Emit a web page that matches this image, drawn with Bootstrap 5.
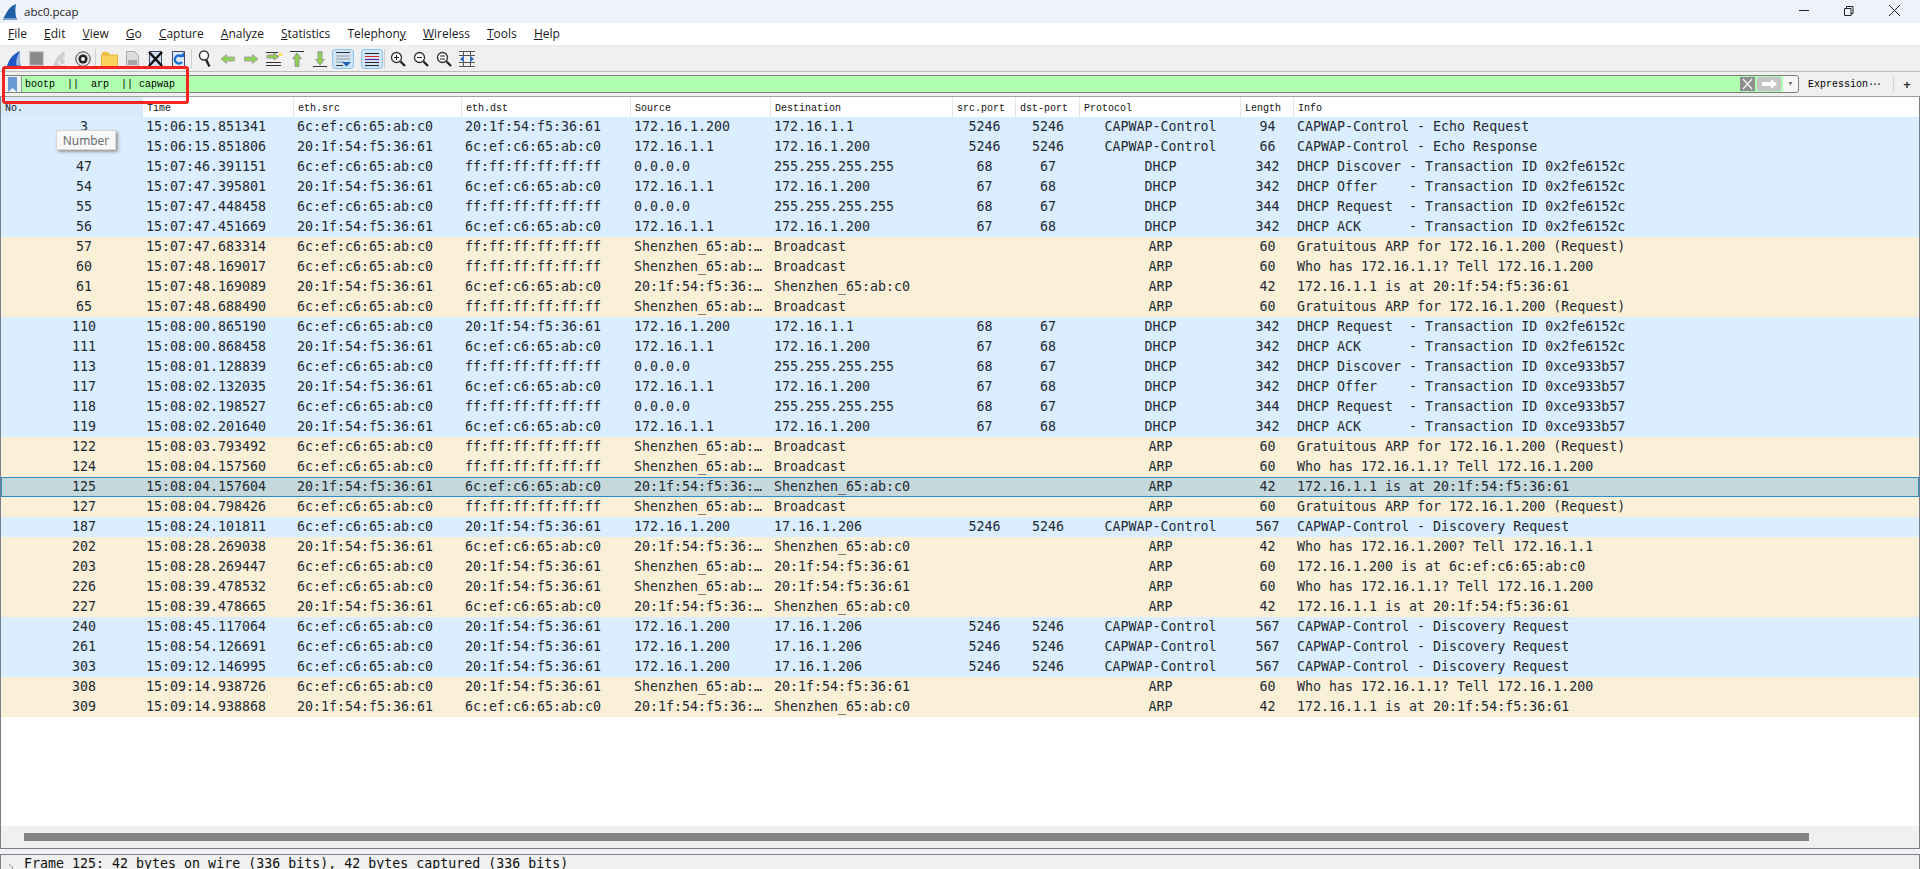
<!doctype html>
<html><head><meta charset="utf-8">
<link href="https://cdn.jsdelivr.net/npm/bootstrap@5.3.0/dist/css/bootstrap.min.css" rel="stylesheet">
<style>
html,body{height:869px;overflow:hidden;background:#f0f0f0}
.ws-app{height:869px;font-family:"Open Sans","Noto Sans",sans-serif;font-size:12px;color:#111;position:relative}
.ws-title{height:23px;background:#eef2fb;padding-left:3px;flex:none}
.ws-title-text{margin-left:7px;font-size:11.500px;line-height:23px;color:#222}
.ws-winbtns{margin-left:auto;width:133px}
.ws-menu{height:23px;flex:none;background:#fff;border-bottom:1px solid #ececec;padding-left:8px;gap:17.100px;line-height:22px;font-size:12px;color:#1a1a1a}
.ws-menu u{text-decoration-thickness:1px;text-underline-offset:1px}
.ws-tools{height:26px;flex:none;background:#f0f0f0;padding-left:2px;border-bottom:1px solid #bdbdbd}
.ws-tools svg{display:block;flex:none}
.ws-slot{width:23px;flex:none;display:flex;justify-content:center}
.ws-slot2{margin-left:6px}
.ws-on{background:#cde4f7;border:1px solid #8fc4ee;border-radius:3px;width:22px;height:20px;display:flex;align-items:center;justify-content:center}
.ws-sep{width:1px;height:19px;background:#cfcfcf;margin:0 1.250px;flex:none}
.ws-filter{height:24px;flex:none;padding:3px 0 0 2px;background:#f0f0f0}
.ws-fbox{height:18px;flex:1;background:#afffaf;border:1px solid #7e7e7e;border-radius:0 3px 3px 0;font-family:"Liberation Mono",monospace;font-size:10px;line-height:18px;color:#000}
.ws-book{width:19px;flex:none;background:#f0f0f0;border-right:1px solid #7e9e8e;display:flex;align-items:center;justify-content:center}
.ws-ftext{padding-left:3px;white-space:pre}
.ws-fend{margin-left:auto;flex:none;gap:2px}
.ws-fdrop{width:15px;background:#f6f6f6;text-align:center;font-size:9px;color:#666;align-self:stretch;border-radius:0 3px 3px 0;line-height:16px}
.ws-expr{width:94px;flex:none;font-family:"Liberation Mono",monospace;font-size:10px;padding-left:9px;line-height:20px;color:#000;white-space:nowrap}
.ws-expr span{letter-spacing:-2px}
.ws-plus{width:27px;flex:none;border-left:1px solid #d0d0d0;height:14px;text-align:center;font-weight:700;line-height:14px;font-size:13px;margin-top:2px;color:#333}
.ws-list{height:753px;flex:none;background:#fff;border:1px solid #7b7f8b;border-top:1px solid #a0a0a0;position:relative;display:flex;flex-direction:column}
.ws-head,.ws-row{display:grid;grid-template-columns:142px 151px 168px 169px 140px 182px 63px 64px 161px 53px 1fr}
.ws-head{height:20px;flex:none;font-family:"Liberation Mono",monospace;font-size:10px;line-height:23px;color:#111}
.ws-head>div{padding-left:4px;border-right:1px solid #e4e4e4;white-space:nowrap;overflow:hidden}
.ws-head>div:first-child{background:#d9ebfb;padding-left:4px;border-right:0}
.ws-head>div:last-child{border-right:0}
.ws-rows{flex:1}
.ws-row{height:20px;font-family:"DejaVu Sans Mono",monospace;font-size:13.300px;line-height:20px;color:#1f2a33;white-space:pre}
.ws-row>div{overflow:hidden;padding-left:3px}
.ws-row .ws-c{padding-left:0;text-align:center}
.ws-row .ws-n{padding-left:24px;text-align:center}
.ws-blue{background:#daeeff}
.ws-tan{background:#faf0d7}
.ws-row.ws-sel{background:#c5d9dd;box-shadow:inset 0 0 0 1px #2d8fc9}
.ws-hscroll{height:22px;flex:none;background:#f0f0f0;padding:7px 0 0 23px}
.ws-thumb{height:8px;width:1785px;background:#848484}
.ws-detail{height:15px;flex:none;margin-top:5px;border:1px solid #7b7f8b;border-bottom:0;background:#f0f0f0;overflow:hidden;font-family:"DejaVu Sans Mono",monospace;font-size:13.300px;line-height:18px;color:#111;white-space:pre;display:flex}
.ws-detail .ws-arrow{width:23px;flex:none}
.ws-tip{position:absolute;left:56px;top:130px;width:60px;height:20px;background:#f8f8f8;border:1px solid #d8d8d8;box-shadow:2px 2px 3px #999;font-size:12px;line-height:19px;text-align:center;color:#666}
.ws-red{position:absolute;left:2px;top:66px;width:187px;height:38px;border:3px solid #f4241f;border-radius:3px;pointer-events:none}
</style></head><body>
<div class="ws-app d-flex flex-column">
 <div class="ws-title d-flex align-items-center">
  <svg width="14" height="18" viewBox="0 0 14 18"><path d="M0 17C3 9 7 3 13 1c-1 5-1 11 1 16z" fill="#1e5fa8"/><path d="M0 17l14 0-.6-2H1z" fill="#7aa4d0"/></svg>
  <span class="ws-title-text">abc0.pcap</span>
  <div class="ws-winbtns d-flex align-items-center">
   <svg width="133" height="23" viewBox="0 0 133 23"><path d="M12 10.500h10" stroke="#222" fill="none"/><path d="M57.500 8.500h6.500v7h-6.500zM59.500 8.500v-2h6.500v7h-2" stroke="#222" fill="none"/><path d="M102 5l11 11M113 5l-11 11" stroke="#222" fill="none"/></svg>
  </div>
 </div>
 <div class="ws-menu d-flex">
  <span><u>F</u>ile</span><span><u>E</u>dit</span><span><u>V</u>iew</span><span><u>G</u>o</span><span><u>C</u>apture</span><span><u>A</u>nalyze</span><span><u>S</u>tatistics</span><span>Telephon<u>y</u></span><span><u>W</u>ireless</span><span><u>T</u>ools</span><span><u>H</u>elp</span>
 </div>
 <div class="ws-tools d-flex align-items-center" id="tb"></div>
 <div class="ws-filter d-flex">
  <div class="ws-fbox d-flex">
   <div class="ws-book"><svg width="9" height="15" viewBox="0 0 9 15"><path d="M0 0h9v15L4.500 11 0 15z" fill="#6a9ad6"/></svg></div>
   <div class="ws-ftext">bootp  ||  arp  || capwap</div>
   <div class="ws-fend d-flex align-items-center">
    <svg width="15" height="14" viewBox="0 0 15 14"><rect width="15" height="14" fill="#8e8e8e"/><path d="M3 2l9 10M12 2L3 12" stroke="#f4f4f4" stroke-width="1.300"/></svg>
    <svg width="24" height="14" viewBox="0 0 24 14"><rect width="24" height="14" rx="2" fill="#c4c4c4"/><path d="M5 5h9V2l6 5-6 5V9H5z" fill="#fff"/></svg>
    <div class="ws-fdrop">&#9662;</div>
   </div>
  </div>
  <div class="ws-expr">Expression<span>···</span></div>
  <div class="ws-plus">+</div>
 </div>
 <div class="ws-list">
  <div class="ws-head"><div>No.</div><div>Time</div><div>eth.src</div><div>eth.dst</div><div>Source</div><div>Destination</div><div>src.port</div><div>dst-port</div><div>Protocol</div><div>Length</div><div>Info</div></div>
  <div class="ws-rows" id="rows"></div>
  <div class="ws-hscroll"><div class="ws-thumb"></div></div>
 </div>
 <div class="ws-detail"><div class="ws-arrow"><svg width="19" height="15" viewBox="0 0 19 15"><path d="M8 7l4 4-4 4" stroke="#999" fill="none"/></svg></div><div>Frame 125: 42 bytes on wire (336 bits), 42 bytes captured (336 bits)</div></div>
 <div class="ws-tip">Number</div>
 <div class="ws-red"></div>
</div>
<script>
const A='6c:ef:c6:65:ab:c0',B='20:1f:54:f5:36:61',F='ff:ff:ff:ff:ff:ff',I1='172.16.1.200',I2='172.16.1.1',Z='0.0.0.0',BC='255.255.255.255',SA='Shenzhen_65:ab:…',TB='20:1f:54:f5:36:…',SF='Shenzhen_65:ab:c0',BR='Broadcast',T6='17.16.1.206';
const D=[
['3','15:06:15.851341',A,B,I1,I2,'5246','5246','CAPWAP-Control','94','CAPWAP-Control - Echo Request'],
['4','15:06:15.851806',B,A,I2,I1,'5246','5246','CAPWAP-Control','66','CAPWAP-Control - Echo Response'],
['47','15:07:46.391151',A,F,Z,BC,'68','67','DHCP','342','DHCP Discover - Transaction ID 0x2fe6152c'],
['54','15:07:47.395801',B,A,I2,I1,'67','68','DHCP','342','DHCP Offer    - Transaction ID 0x2fe6152c'],
['55','15:07:47.448458',A,F,Z,BC,'68','67','DHCP','344','DHCP Request  - Transaction ID 0x2fe6152c'],
['56','15:07:47.451669',B,A,I2,I1,'67','68','DHCP','342','DHCP ACK      - Transaction ID 0x2fe6152c'],
['57','15:07:47.683314',A,F,SA,BR,'','','ARP','60','Gratuitous ARP for 172.16.1.200 (Request)'],
['60','15:07:48.169017',A,F,SA,BR,'','','ARP','60','Who has 172.16.1.1? Tell 172.16.1.200'],
['61','15:07:48.169089',B,A,TB,SF,'','','ARP','42','172.16.1.1 is at 20:1f:54:f5:36:61'],
['65','15:07:48.688490',A,F,SA,BR,'','','ARP','60','Gratuitous ARP for 172.16.1.200 (Request)'],
['110','15:08:00.865190',A,B,I1,I2,'68','67','DHCP','342','DHCP Request  - Transaction ID 0x2fe6152c'],
['111','15:08:00.868458',B,A,I2,I1,'67','68','DHCP','342','DHCP ACK      - Transaction ID 0x2fe6152c'],
['113','15:08:01.128839',A,F,Z,BC,'68','67','DHCP','342','DHCP Discover - Transaction ID 0xce933b57'],
['117','15:08:02.132035',B,A,I2,I1,'67','68','DHCP','342','DHCP Offer    - Transaction ID 0xce933b57'],
['118','15:08:02.198527',A,F,Z,BC,'68','67','DHCP','344','DHCP Request  - Transaction ID 0xce933b57'],
['119','15:08:02.201640',B,A,I2,I1,'67','68','DHCP','342','DHCP ACK      - Transaction ID 0xce933b57'],
['122','15:08:03.793492',A,F,SA,BR,'','','ARP','60','Gratuitous ARP for 172.16.1.200 (Request)'],
['124','15:08:04.157560',A,F,SA,BR,'','','ARP','60','Who has 172.16.1.1? Tell 172.16.1.200'],
['125','15:08:04.157604',B,A,TB,SF,'','','ARP','42','172.16.1.1 is at 20:1f:54:f5:36:61'],
['127','15:08:04.798426',A,F,SA,BR,'','','ARP','60','Gratuitous ARP for 172.16.1.200 (Request)'],
['187','15:08:24.101811',A,B,I1,T6,'5246','5246','CAPWAP-Control','567','CAPWAP-Control - Discovery Request'],
['202','15:08:28.269038',B,A,TB,SF,'','','ARP','42','Who has 172.16.1.200? Tell 172.16.1.1'],
['203','15:08:28.269447',A,B,SA,B,'','','ARP','60','172.16.1.200 is at 6c:ef:c6:65:ab:c0'],
['226','15:08:39.478532',A,B,SA,B,'','','ARP','60','Who has 172.16.1.1? Tell 172.16.1.200'],
['227','15:08:39.478665',B,A,TB,SF,'','','ARP','42','172.16.1.1 is at 20:1f:54:f5:36:61'],
['240','15:08:45.117064',A,B,I1,T6,'5246','5246','CAPWAP-Control','567','CAPWAP-Control - Discovery Request'],
['261','15:08:54.126691',A,B,I1,T6,'5246','5246','CAPWAP-Control','567','CAPWAP-Control - Discovery Request'],
['303','15:09:12.146995',A,B,I1,T6,'5246','5246','CAPWAP-Control','567','CAPWAP-Control - Discovery Request'],
['308','15:09:14.938726',A,B,SA,B,'','','ARP','60','Who has 172.16.1.1? Tell 172.16.1.200'],
['309','15:09:14.938868',B,A,TB,SF,'','','ARP','42','172.16.1.1 is at 20:1f:54:f5:36:61']];
const cen=[6,7,8,9];
document.getElementById('rows').innerHTML=D.map(r=>{
 const cls=r[0]=='125'?'ws-sel':(r[8]=='ARP'?'ws-tan':'ws-blue');
 return '<div class="ws-row '+cls+'">'+r.map((v,i)=>'<div class="'+(i==0?'ws-n':cen.includes(i)?'ws-c':'')+'">'+v+'</div>').join('')+'</div>';
}).join('');
const arrow=(d)=>'<svg width="16" height="16" viewBox="0 0 16 16"><path d="'+d+'" fill="#8fd04f" stroke="#a8a8a8"/></svg>';
const glass=(m)=>'<svg width="16" height="16" viewBox="0 0 16 16"><circle cx="6.500" cy="6.500" r="5" fill="#fff" stroke="#333" stroke-width="1.300"/><path d="'+m+'" stroke="#222" fill="none"/><path d="M10.500 10.500l4.500 4.500" stroke="#222" stroke-width="2.300"/></svg>';
const ic=[
 '<svg width="14" height="16" viewBox="0 0 14 16"><path d="M0 15C2 8 6 3 13 0c-1 5-1 10 1 15z" fill="#2158c8"/><path d="M9 14C9 9 10 5 13 0c-1 5-1 10 1 15z" fill="#9db6e0"/></svg>',
 '<svg width="15" height="15" viewBox="0 0 15 15"><rect x=".5" y=".5" width="14" height="14" fill="#8a8a8a" stroke="#c6c6c6" stroke-width="1.500"/></svg>',
 '<svg width="15" height="16" viewBox="0 0 15 16"><path d="M1 15C3 8 7 3 13 0c-1 5-1 10 1 15z" fill="#cfcfcf"/><path d="M11 7a3.500 3.500 0 1 1-4 3" fill="none" stroke="#f4f4f4" stroke-width="1.500"/></svg>',
 '<svg width="16" height="16" viewBox="0 0 16 16"><circle cx="8" cy="8" r="7.300" fill="#ddd" stroke="#555"/><circle cx="8" cy="8" r="4.500" fill="#222"/><circle cx="8" cy="8" r="2" fill="#fff"/></svg>',
 'sep',
 '<svg width="17" height="16" viewBox="0 0 17 16"><path d="M1 4V1h6l2 3z" fill="#f0bf3c"/><rect x=".5" y="4" width="16" height="11.500" fill="#fbd25e" stroke="#e6b544"/></svg>',
 '<svg width="15" height="16" viewBox="0 0 15 16"><path d="M1.500 .5h8l4 4v11h-12z" fill="#dcdcdc" stroke="#aaa"/><rect x="3" y="9" width="9" height="5" fill="#a8a8a8"/></svg>',
 '<svg width="15" height="16" viewBox="0 0 15 16"><path d="M1.500 .5h12v15h-12z" fill="#cfe0f5" stroke="#446"/><path d="M1 1l13 14M14 1L1 15" stroke="#111" stroke-width="2.500"/></svg>',
 '<svg width="15" height="16" viewBox="0 0 15 16"><path d="M1.500 .5h12v15h-12z" fill="#dbe8f7" stroke="#446"/><path d="M11 6a4 4 0 1 0 0 5" fill="none" stroke="#1c6ed0" stroke-width="2.300"/><path d="M8 6h5V1z" fill="#1c6ed0"/></svg>',
 'sep',
 '<svg width="13" height="17" viewBox="0 0 13 17"><circle cx="6" cy="5.500" r="4.500" fill="#fff" stroke="#333" stroke-width="1.400"/><path d="M8 9.500l3.500 7" stroke="#222" stroke-width="2.300"/></svg>',
 arrow('M1 8l5.500-4.500v2.500h8v4h-8v2.500z'),
 arrow('M15 8l-5.500-4.500v2.500h-8v4h8v2.500z'),
 '<svg width="16" height="16" viewBox="0 0 16 16"><path d="M0 1.500h12M0 11.500h15M0 14.500h15" stroke="#333"/><path d="M1 4h7V2l5 3.500-5 3.500V7H1z" fill="#8fd04f" stroke="#999"/><rect x="13" y="2" width="3" height="3" fill="#f5e34a"/></svg>',
 '<svg width="16" height="16" viewBox="0 0 16 16"><path d="M1 .5h14" stroke="#333"/><path d="M8 2l4.500 5.500h-2.500v8h-4v-8h-2.500z" fill="#8fd04f" stroke="#999"/></svg>',
 '<svg width="16" height="16" viewBox="0 0 16 16"><path d="M1 15.500h14" stroke="#333"/><path d="M8 14l4.500-5.500h-2.500v-8h-4v8h-2.500z" fill="#8fd04f" stroke="#999"/></svg>',
 'on1','on2',
 'sep',
 glass('M4 6.500h5M6.500 4v5'),
 glass('M4 6.500h5'),
 glass('M4 5h5M4 8h5'),
 '<svg width="16" height="16" viewBox="0 0 16 16"><path d="M0 .5h16M0 15.500h16M0 4.500h16M0 11.500h16M4.500 0v16M11.500 0v16" stroke="#555"/><path d="M1 8l4-3.500v7zM15 8l-4-3.500v7z" fill="#2c6fc0"/></svg>'
];
const on1='<div class="ws-on"><svg width="16" height="16" viewBox="0 0 16 16"><path d="M1 1.500h14" stroke="#333"/><path d="M1 5h14M1 8h14M1 11h8" stroke="#999"/><path d="M1 14.500h7" stroke="#333"/><path d="M7 11h9l-4.500 4.500z" fill="#1f5fb5"/></svg></div>';
const on2='<div class="ws-on"><svg width="16" height="14" viewBox="0 0 16 14"><path d="M1 1.500h14M1 10.500h14M1 13.500h14" stroke="#222"/><path d="M1 4.500h14" stroke="#d22"/><path d="M1 7.500h14" stroke="#619"/></svg></div>';
document.getElementById('tb').innerHTML=ic.map(s=>s=='sep'?'<div class="ws-sep"></div>':'<div class="ws-slot'+(s=='on2'?' ws-slot2':'')+'">'+(s=='on1'?on1:s=='on2'?on2:s)+'</div>').join('');
</script>
<script src="https://cdn.jsdelivr.net/npm/bootstrap@5.3.0/dist/js/bootstrap.bundle.min.js"></script>
</body></html>
